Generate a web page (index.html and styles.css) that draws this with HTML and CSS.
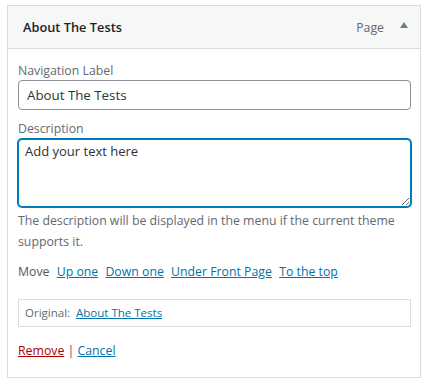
FILE: index.html
```html
<!DOCTYPE html>
<html lang="en">
<head>
    <meta charset="UTF-8">
    <meta name="viewport" content="width=device-width, initial-scale=1.0">
    <title>Menu Item</title>
    <link rel="stylesheet" href="styles.css">
</head>
<body>
    <div class="menu-item">
        <div class="item-bar">
            <span class="item-title">About The Tests</span>
            <span class="item-controls">
                <span class="item-type">Page</span>
                <span class="item-toggle"></span>
            </span>
        </div>
        <div class="item-settings">
            <p class="field">
                <label for="navLabel">Navigation Label</label>
                <input type="text" id="navLabel" value="About The Tests">
            </p>
            <p class="field">
                <label for="navDesc">Description</label>
                <textarea id="navDesc">Add your text here</textarea>
                <span class="description">The description will be displayed in the menu if the current theme supports it.</span>
            </p>
            <p class="field-move">
                Move
                <a href="#">Up one</a>
                <a href="#">Down one</a>
                <a href="#">Under Front Page</a>
                <a href="#">To the top</a>
            </p>
            <div class="link-to-original">
                Original: <a href="#">About The Tests</a>
            </div>
            <div class="item-actions">
                <a href="#" class="remove">Remove</a> <span class="sep">|</span> <a href="#">Cancel</a>
            </div>
        </div>
    </div>
</body>
</html>
```

FILE: styles.css
```css
body {
    font-family: "Open Sans", "Noto Sans", sans-serif;
    font-size: 12.3px;
    color: #3c434a;
    background-color: #fff;
    margin: 0;
    padding: 5px 7px;
}
a {
    color: #0073aa;
}
.menu-item {
    width: 414px;
    box-sizing: border-box;
    border: 1px solid #dcdcde;
}
.item-bar {
    height: 42px;
    background-color: #f6f7f7;
    border-bottom: 1px solid #dcdcde;
    display: flex;
    align-items: center;
    justify-content: space-between;
    padding: 0 12px 0 15px;
}
.item-title {
    font-size: 12.8px;
    font-weight: 600;
    color: #1d2327;
}
.item-controls {
    display: flex;
    align-items: center;
}
.item-type {
    color: #646970;
    font-size: 12.3px;
}
.item-toggle {
    width: 0;
    height: 0;
    margin-left: 16px;
    border-left: 4px solid transparent;
    border-right: 4px solid transparent;
    border-bottom: 6px solid #787c82;
    margin-top: -4px;
}
.item-settings {
    padding: 13px 9px 16px 10px;
}
.field {
    margin: 0 0 10px;
}
label {
    display: block;
    color: #646970;
    line-height: 18px;
}
input[type="text"] {
    display: block;
    width: 100%;
    box-sizing: border-box;
    height: 30px;
    margin: 0;
    padding: 0 8px;
    border: 1px solid #8c8f94;
    border-radius: 4px;
    font-family: inherit;
    font-size: 13.3px;
    color: #2c3338;
}
textarea {
    display: block;
    width: 100%;
    box-sizing: border-box;
    height: 68px;
    margin: 1px 0 0;
    padding: 2px 6px;
    border: 1px solid #007cba;
    box-shadow: 0 0 0 1px #007cba;
    border-radius: 4px;
    font-family: inherit;
    font-size: 13px;
    color: #2c3338;
    outline: none;
}
.description {
    display: block;
    margin-top: 3px;
    line-height: 21px;
    color: #646970;
}
.field-move {
    margin: 0 0 17px;
    line-height: 20px;
    color: #50575e;
}
.field-move a {
    margin-left: 4px;
}
.link-to-original {
    border: 1px solid #dcdcde;
    padding: 4px 6px;
    line-height: 18px;
    color: #646970;
    font-size: 11.5px;
}
.link-to-original a {
    margin-left: 3px;
}
.item-actions {
    margin-top: 14px;
    line-height: 20px;
}
.item-actions .remove {
    color: #a00;
}
.sep {
    color: #50575e;
}
```
